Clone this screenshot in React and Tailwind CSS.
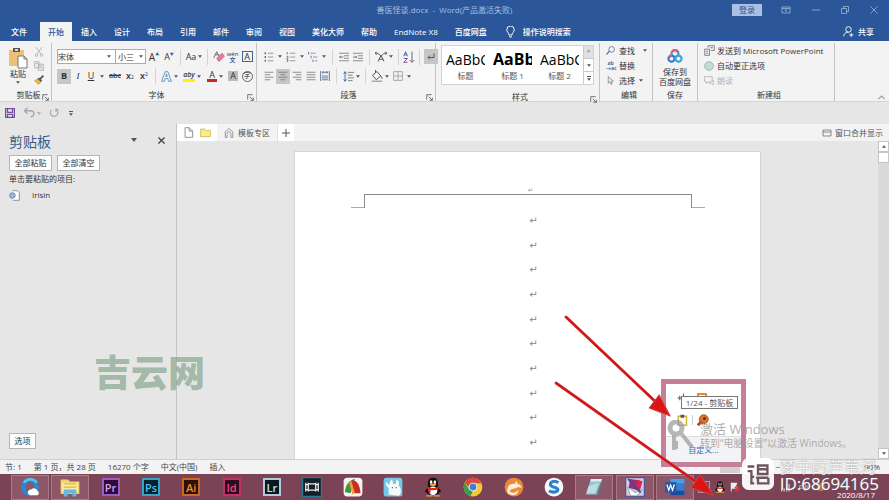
import React from "react";

function Icon({ className = "size-3", box = "0 0 16 16", children }) {
  return (
    <svg viewBox={box} className={"shrink-0 " + className} fill="none" stroke="currentColor" strokeWidth="1.3" aria-hidden="true">
      {children}
    </svg>
  );
}

function Caret() {
  return (
    <svg viewBox="0 0 6 4" className="h-[3px] w-1 shrink-0" fill="#555" aria-hidden="true">
      <path d="M0 0h6L3 4z" />
    </svg>
  );
}

function Tool({ label, on, className = "w-4", children }) {
  return (
    <button aria-label={label} className={"flex h-[15px] shrink-0 items-center justify-center gap-0.5 " + (on ? "bg-[#c6c6c6] " : "") + className}>
      {children}
    </button>
  );
}

function Group({ name, launcher, className, children }) {
  return (
    <section className={"mt-0.5 flex shrink-0 flex-col border-r border-[#c4c4c4] " + className}>
      <div className="h-[46px] shrink-0">{children}</div>
      <div className="relative flex h-3 shrink-0 items-center justify-center whitespace-nowrap text-[#333]">
        {name}
        {launcher && (
          <Icon className="absolute right-0.5 bottom-0 size-[7px] text-[#666]" box="0 0 10 10">
            <path d="M1 8V1h7M4 4l5 5M9 5v4H5" />
          </Icon>
        )}
      </div>
    </section>
  );
}

const lines = {
  left: "M1 2h14M1 6h9M1 10h14M1 14h9",
  center: "M1 2h14M4 6h8M1 10h14M4 14h8",
  right: "M1 2h14M6 6h9M1 10h14M6 14h9",
  full: "M1 2h14M1 6h14M1 10h14M1 14h14",
};

function Separator() {
  return <span className="mx-1 h-4 w-px shrink-0 bg-[#d4d4d4]" />;
}

function TitleBar() {
  return (
    <header className="relative flex h-5 shrink-0 items-center justify-end gap-[19px] pr-[11px] text-[#b9cbe6]">
      <h1 className="absolute inset-x-0 text-center text-[8px] text-[#a9bfdf]">善医怪谈.docx &nbsp;-&nbsp; Word(产品激活失败)</h1>
      <button className="relative flex h-3 w-[30px] items-center justify-center bg-[#a9c0e2] text-[#2b579a]">登录</button>
      <button aria-label="功能区显示选项" className="relative">
        <Icon className="h-2 w-2.5"><path d="M0 2h16v12H0zM0 5h16M8 12V7M6 9l2-2 2 2" /></Icon>
      </button>
      <button aria-label="最小化" className="relative ml-0.5"><Icon className="size-2"><path d="M0 8h16" /></Icon></button>
      <button aria-label="还原" className="relative ml-0.5"><Icon className="size-2"><path d="M1 5h10v10H1zM5 5V1h10v10h-4" /></Icon></button>
      <button aria-label="关闭" className="relative ml-0.5"><Icon className="size-2"><path d="M1 1l14 14M15 1L1 15" /></Icon></button>
    </header>
  );
}

function Tabs() {
  const names = ["插入", "设计", "布局", "引用", "邮件", "审阅", "视图", "美化大师", "帮助", "EndNote X8", "百度网盘"];
  return (
    <nav className="flex h-[21px] shrink-0 items-end gap-px pr-[15px] pl-[3px] font-medium whitespace-nowrap text-white">
      <button className="mr-1 h-[19px] px-2">文件</button>
      <button className="h-[19px] bg-[#f3f3f3] px-2 text-[#2b579a]">开始</button>
      {names.map((n) => <button key={n} className="h-[19px] px-2">{n}</button>)}
      <button className="flex h-[19px] items-center gap-2 pl-2.5">
        <Icon className="h-3 w-[9px]" box="0 0 12 16"><path d="M4 12C4 9 1 8 1 5a5 5 0 0 1 10 0c0 3-3 4-3 7zM4 14.500h4" /></Icon>
        操作说明搜索
      </button>
      <button className="ml-auto flex h-[19px] items-center gap-1">
        <Icon className="size-[11px]"><circle cx="8" cy="5" r="4" /><path d="M1 15c0-4 3-6 7-6M9 13h6M12 10v6" /></Icon>
        共享
      </button>
    </nav>
  );
}

function Clipboard() {
  return (
    <Group name="剪贴板" launcher className="w-[52px] pl-1.5">
      <div className="flex gap-1.5 pt-1 pl-0.5">
        <button className="flex flex-col items-center">
          <svg viewBox="0 0 20 22" className="h-[22px] w-5" aria-hidden="true">
            <path d="M1 3h15v16H1z" fill="#edc077" /><path d="M5 1h7v4H5z" fill="#555" /><path d="M7 2h3v2H7z" fill="#ddd" />
            <path d="M10 9h6l3 3v9h-9z" fill="#fff" stroke="#777" /><path d="M16 9v3h3" fill="none" stroke="#777" />
          </svg>
          <span className="leading-[10px]">粘贴</span>
          <span className="flex pt-0.5"><Caret /></span>
        </button>
        <div className="flex flex-col gap-1 text-[#aaa]">
          <button aria-label="剪切"><Icon className="size-2.5"><path d="M3 0l8 11M13 0L5 11" /><circle cx="4" cy="13" r="2" /><circle cx="12" cy="13" r="2" /></Icon></button>
          <button aria-label="复制"><Icon className="size-2.5"><path d="M1 1h7v10H1zM7 5h8v10H7zM9 8h4M9 11h4M3 4h3" fill="#eee" /></Icon></button>
          <button aria-label="格式刷"><Icon className="size-2.5"><path d="M1 9l5-3 5 5-4 4z" fill="#e8b565" stroke="#c99846" /><path d="M7 5l5 5M9 7l6-6" stroke="#555" strokeWidth="3" /></Icon></button>
        </div>
      </div>
    </Group>
  );
}

function FontGroup() {
  return (
    <Group name="字体" launcher className="w-[205px] pl-[5px]">
      <div className="flex h-[25px] items-center pt-0.5">
        <label className="flex h-[15px] w-[59px] items-center border border-[#ababab] bg-white pr-1">
          <select aria-label="字体" className="min-w-0 flex-1 appearance-none"><option>宋体</option></select><Caret />
        </label>
        <label className="flex h-[15px] w-[30px] items-center border border-l-0 border-[#ababab] bg-white pr-0.5 pl-0.5">
          <select aria-label="字号" className="min-w-0 flex-1 appearance-none"><option>小三</option></select><Caret />
        </label>
        <Tool label="增大字号"><span className="text-[10px]">A</span><span className="-ml-0.5 self-start text-[4px] text-[#35679b]">▲</span></Tool>
        <Tool label="减小字号" className="w-3.5"><span className="text-[9px]">A</span><span className="-ml-0.5 self-start text-[4px] text-[#35679b]">▼</span></Tool>
        <Separator />
        <Tool label="更改大小写" className="w-[18px]"><span className="text-[9px]">Aa</span><Caret /></Tool>
        <Separator />
        <Tool label="清除格式" className="w-3.5">
          <Icon className="size-3"><path d="M1 9l4-8 3 6M3 5h4" stroke="#667" /><path d="M5 10l7-7 3 4-7 7z" fill="#e57e93" stroke="#c96a80" /></Icon>
        </Tool>
        <Tool label="拼音指南" className="w-[13px]"><span className="text-[6px] leading-[6px]">wén<br /><b className="text-[#35679b]">文</b></span></Tool>
        <Tool label="字符边框"><span className="flex size-[11px] items-center justify-center border border-[#40648d] text-[9px] font-medium">A</span></Tool>
      </div>
      <div className="flex h-4 items-center text-[9px]">
        <Tool label="加粗" on className="w-3.5"><b>B</b></Tool>
        <Tool label="倾斜" className="w-3.5"><i className="font-['Liberation_Serif']">I</i></Tool>
        <Tool label="下划线" className="w-[22px]"><u>U</u><span className="ml-1"><Caret /></span></Tool>
        <Tool label="删除线"><s className="text-[7px] font-semibold">abc</s></Tool>
        <Tool label="下标" className="w-3.5"><b className="font-semibold">x</b><sub className="-ml-0.5 text-[5px]">2</sub></Tool>
        <Tool label="上标" className="w-3.5"><b className="font-semibold">x</b><sup className="-ml-0.5 text-[5px]">2</sup></Tool>
        <Separator />
        <Tool label="文本效果" className="w-[18px]">
          <Icon className="size-[11px] text-[#5a90c8]"><path d="M1 15L6 1h4l5 14h-4l-1-4H6l-1 4zM7 8l1-4 1 4z" /></Icon><Caret />
        </Tool>
        <Tool label="突出显示" className="ml-1 w-5"><span className="border-b-[3px] border-[#fff200] text-[7px] leading-2 font-semibold italic">aby</span><Caret /></Tool>
        <Tool label="字体颜色" className="ml-1 w-[18px]"><span className="border-b-[3px] border-[#c62828] px-0.5 leading-[9px] font-medium">A</span><Caret /></Tool>
        <Tool label="字符底纹" className="ml-0.5 w-3.5"><span className="flex size-[10px] items-center justify-center bg-[#bbb]">A</span></Tool>
        <Tool label="带圈字符" className="w-3.5"><span className="flex size-[11px] items-center justify-center rounded-full border border-[#666] text-[7px]">字</span></Tool>
      </div>
    </Group>
  );
}

function ParagraphGroup() {
  const list = <path d="M6 2h9M6 8h9M6 14h9" stroke="#888" />;
  return (
    <Group name="段落" launcher className="w-[179px] pl-[5px]">
      <div className="flex h-[25px] items-center pt-0.5">
        <Tool label="项目符号" className="w-[22px]"><Icon className="size-2.5">{list}<path d="M1 2h2M1 8h2M1 14h2" stroke="#35679b" strokeWidth="3" /></Icon><span className="ml-0.5"><Caret /></span></Tool>
        <Tool label="编号" className="w-[22px]"><Icon className="size-2.5">{list}<path d="M2 0v4M1 7h2v3H1M1 12h2v3H1" stroke="#35679b" /></Icon><span className="ml-0.5"><Caret /></span></Tool>
        <Tool label="多级列表" className="w-[22px]"><Icon className="size-2.5"><path d="M4 2h8M8 8h7M11 14h4" stroke="#888" /><path d="M1 0v4M5 6v4M8 12v4" stroke="#35679b" /></Icon><span className="ml-0.5"><Caret /></span></Tool>
        <Separator />
        <Tool label="减少缩进" className="w-3.5"><Icon className="size-2.5 text-[#777]"><path d="M0 2h16M8 6h8M8 10h8M0 14h16" /><path d="M7 8H1M3 6L1 8l2 2" stroke="#2b6cb0" /></Icon></Tool>
        <Tool label="增加缩进" className="w-3.5"><Icon className="size-2.5 text-[#777]"><path d="M0 2h16M8 6h8M8 10h8M0 14h16" /><path d="M0 8h6M4 6l2 2-2 2" stroke="#2b6cb0" /></Icon></Tool>
        <Separator />
        <Tool label="中文版式" className="w-5"><Icon className="size-3"><path d="M4 14l4-8 4 8M5 11h6M0 3h4l4 4M16 3h-4L8 7M2 1L0 3l2 2M14 1l2 2-2 2" stroke="#555" /></Icon><Caret /></Tool>
        <Separator />
        <Tool label="排序" className="w-3"><Icon className="size-3"><path d="M1 7l2.500-6L6 7M2 5h3" stroke="#2b6cb0" /><path d="M1 10h5l-5 5h5" stroke="#8b4aa0" /><path d="M12 1v14M9 12l3 3 3-3" stroke="#666" /></Icon></Tool>
        <Separator />
        <Tool label="显示编辑标记" on className="w-3.5"><Icon className="size-2 text-[#555]"><path d="M14 1v8H3M6 5L2 9l4 4" strokeWidth="2" /></Icon></Tool>
      </div>
      <div className="flex h-4 items-center text-[#777]">
        <Tool label="左对齐" className="w-3.5"><Icon className="size-2.5"><path d={lines.left} /></Icon></Tool>
        <Tool label="居中" on className="w-3.5"><Icon className="size-2.5"><path d={lines.center} /></Icon></Tool>
        <Tool label="右对齐" className="w-3.5"><Icon className="size-2.5"><path d={lines.right} /></Icon></Tool>
        <Tool label="两端对齐" className="w-3.5"><Icon className="size-2.5"><path d={lines.full} /></Icon></Tool>
        <Tool label="分散对齐" className="w-3.5"><Icon className="size-2.5 text-[#47688c]"><path d="M1 0v16M15 0v16M3 2h10M3 8h10M3 11h10M3 14h10M5 0v4M11 0v4" /></Icon></Tool>
        <Separator />
        <Tool label="行距" className="w-5"><Icon className="size-[11px]"><path d="M7 2h9M7 6h7M7 10h9M7 14h7" /><path d="M3 1v14M1 4l2-3 2 3M1 12l2 3 2-3" stroke="#2b6cb0" /></Icon><Caret /></Tool>
        <Separator />
        <Tool label="底纹" className="w-5"><Icon className="size-3"><path d="M2 7l6-5 5 6-6 5zM6 4V0M13 8c2 2 2 3 1 4" stroke="#555" /><path d="M1 15h14" stroke="#aaa" strokeWidth="2" /></Icon><Caret /></Tool>
        <Tool label="边框" className="ml-0.5 w-5"><Icon className="size-2.5"><path d="M1 1h14v14H1zM8 1v14M1 8h14" stroke="#999" /></Icon><span className="ml-0.5"><Caret /></span></Tool>
      </div>
    </Group>
  );
}

function StylesGroup() {
  const styles = [
    ["标题", "text-[14px]"],
    ["标题 1", "text-[16px] font-bold"],
    ["标题 2", "text-[14px]"],
  ];
  return (
    <Group name="样式" launcher className="w-[164px] pt-0.5 pl-[5px]">
      <div className="-mb-0.5 flex h-10 w-[153px] border border-[#d2d2d2] bg-white">
        {styles.map(([n, c]) => (
          <button key={n} className="flex w-[47px] flex-col items-center px-1">
            <span className={"h-[26px] w-[39px] overflow-hidden text-left leading-[27px] text-black " + c}>AaBbC</span>
            <span className="leading-2 text-[#555]">{n}</span>
          </button>
        ))}
        <div className="ml-auto flex w-2.5 flex-col divide-y divide-[#c8c8c8] border-l border-[#c8c8c8]">
          <button aria-label="上一行" className="flex flex-1 items-center justify-center bg-[#e0e0e0] text-[4px] text-[#aaa]">▲</button>
          <button aria-label="下一行" className="flex flex-1 items-center justify-center"><Caret /></button>
          <button aria-label="其他" className="flex flex-1 flex-col items-center justify-center gap-px"><span className="h-px w-1 bg-[#555]" /><Caret /></button>
        </div>
      </div>
    </Group>
  );
}

function Ribbon() {
  return (
    <div className="flex h-[61px] shrink-0 border-b border-[#d5d5d5] bg-[#f3f3f3] text-[#333]">
      <Clipboard />
      <FontGroup />
      <ParagraphGroup />
      <StylesGroup />
      <Group name="编辑" className="w-[53px] pl-1.5">
        <div className="flex flex-col items-start">
          <button className="flex h-[15px] items-center gap-1"><Icon className="size-[9px] text-[#35679b]"><circle cx="10" cy="6" r="5" /><path d="M6 9l-5 6" strokeWidth="2" /></Icon>查找<span className="ml-1"><Caret /></span></button>
          <button className="flex h-[15px] items-center gap-1"><span className="w-[9px] text-[5px] leading-[5px] font-bold text-[#486c96]">ab<br />→ac</span>替换</button>
          <button className="flex h-[15px] items-center gap-1"><Icon className="size-[9px] text-[#777]"><path d="M4 1v12l3-3 2 5 2-1-2-5h4z" /></Icon>选择<Caret /></button>
        </div>
      </Group>
      <Group name="保存" className="w-[45px]">
        <button className="flex w-full flex-col items-center pt-1.5 leading-[10px]">
          <svg viewBox="0 0 18 16" className="mb-1 h-3.5 w-[18px]" fill="none" strokeWidth="2.500" aria-hidden="true">
            <circle cx="9" cy="5" r="4" stroke="#3e9fe0" /><circle cx="5" cy="11" r="3.500" stroke="#2d7fd0" /><circle cx="13" cy="11" r="3.500" stroke="#38a6d8" /><path d="M5.500 3.500C7 1 11 1 12.500 4M2 10l3-3" stroke="#e9596b" />
          </svg>
          保存到<br />百度网盘
        </button>
      </Group>
      <Group name="新建组" className="w-[137px] pl-1.5">
        <div className="flex flex-col items-start whitespace-nowrap">
          <button className="flex h-[15px] items-center gap-0.5"><Icon className="size-[11px] text-[#777]"><path d="M1 6h7v9H1zM6 4V1h9v7h-5M3 9h3M3 12h3M9 4h4" /></Icon>发送到 Microsoft PowerPoint</button>
          <button className="flex h-[15px] items-center gap-[3px]"><Icon className="size-2.5"><circle cx="8" cy="8" r="7" fill="#c1ddd3" stroke="#8bb8aa" /></Icon>自动更正选项</button>
          <button className="flex h-[15px] items-center gap-[3px] text-[#b0b0b0]"><Icon className="size-2.5"><path d="M1 1h12v7M1 1v8h3v3l4-3M9 9h3l3-2v7l-3-2H9z" /></Icon>朗读</button>
        </div>
      </Group>
      <button aria-label="折叠功能区" className="mt-auto ml-auto p-1 pb-0 text-[#555]"><Icon className="size-[7px]"><path d="M1 11l7-6 7 6" strokeWidth="2" /></Icon></button>
    </div>
  );
}

function QuickAccess() {
  return (
    <div className="flex h-[22px] shrink-0 items-center gap-2 pl-[5px] text-[#aaa]">
      <button aria-label="保存"><Icon className="size-2.5 text-[#75519c]"><path d="M1 1h14v14H1zM4 1v6h8V1M4 15v-5h8v5" strokeWidth="2" /></Icon></button>
      <button aria-label="撤消" className="flex items-center gap-0.5"><Icon className="size-3"><path d="M2 5h8c6 0 6 8 0 8M6 1L2 5l4 4" strokeWidth="2" /></Icon><span className="opacity-40"><Caret /></span></button>
      <button aria-label="重复"><Icon className="size-2.5"><path d="M4 3a6 6 0 1 0 7-1M11 6V2h4" strokeWidth="2" /></Icon></button>
      <button aria-label="自定义快速访问工具栏" className="ml-0.5 flex flex-col items-center gap-px"><span className="h-px w-1 bg-[#555]" /><Caret /></button>
    </div>
  );
}

function ClipboardPane() {
  return (
    <aside className="flex w-[177px] shrink-0 flex-col border-r border-[#c4c4c4] px-[9px] text-[#333]">
      <div className="flex items-center pt-2">
        <h2 className="text-[14px] leading-5 text-[#3a5a84]">剪贴板</h2>
        <button aria-label="任务窗格选项" className="-mt-1 ml-auto"><Icon className="size-1.5" box="0 0 6 6"><path d="M0 1h6L3 5z" fill="#555" stroke="none" /></Icon></button>
        <button aria-label="关闭窗格" className="-mt-1 ml-[21px] pr-0.5"><Icon className="size-[7px] text-[#444]"><path d="M1 1l14 14M15 1L1 15" strokeWidth="3" /></Icon></button>
      </div>
      <div className="flex gap-[5px] pt-[3px]">
        <button className="h-4 w-[43px] border border-[#b5b5b5] bg-[#fdfdfd] leading-3">全部粘贴</button>
        <button className="h-4 w-[43px] border border-[#b5b5b5] bg-[#fdfdfd] leading-3">全部清空</button>
      </div>
      <p className="pt-0.5 leading-3">单击要粘贴的项目:</p>
      <button className="flex h-5 items-center gap-3">
        <Icon className="size-[11px]"><path d="M5 1h7l3 3v11H6" stroke="#888" fill="#fff" /><circle cx="5" cy="8" r="4" fill="#9cbad9" stroke="#567fae" /></Icon>
        Irisin
      </button>
      <button className="mt-auto mb-2.5 h-4 w-[27px] border border-[#b5b5b5] bg-[#fdfdfd] leading-3">选项</button>
    </aside>
  );
}

function DocumentTabs() {
  return (
    <div className="flex h-[17px] shrink-0 items-stretch bg-[#f3f3f3] text-[#555]">
      <div className="flex w-10 items-center justify-center gap-1.5 bg-white">
        <button aria-label="新建文档"><Icon className="size-[11px] text-[#888]"><path d="M3 1h6l5 5v9H3zM9 1v5h5" /></Icon></button>
        <button aria-label="打开文件夹"><Icon className="size-[11px]"><path d="M1 3h6l2 2h6v9H1z" fill="#f9eb91" stroke="#d0ba52" /></Icon></button>
      </div>
      <button className="flex w-[61px] items-center justify-center gap-1 border-r border-[#e0e0e0]">
        <Icon className="size-2.5 text-[#888]"><path d="M2 15V6l6-5 6 5v9h-3V9a3 3 0 0 0-6 0v6z" /></Icon>模板专区
      </button>
      <button aria-label="新建标签" className="flex w-4 items-center justify-center bg-white"><Icon className="size-2"><path d="M8 0v16M0 8h16" strokeWidth="2" /></Icon></button>
      <button className="ml-auto flex items-center gap-[3px] pr-1.5">
        <Icon className="h-2 w-2.5"><path d="M0 2h16v12H0zM0 6h16" /></Icon>窗口合并显示
      </button>
    </div>
  );
}

function Page() {
  return (
    <div className="flex min-h-0 flex-1 flex-col">
      <DocumentTabs />
      <div className="flex min-h-0 flex-1">
        <div className="flex min-w-0 flex-1 justify-center pt-2.5">
          <article className="flex w-[467px] flex-col items-center overflow-hidden border border-b-0 border-[#d5d5d5] bg-white text-[#888]">
            <p className="mt-[34px] h-2 pl-1.5 text-[6px] leading-2">↵</p>
            <div className="flex w-[354px] items-end">
              <span className="h-px flex-1 bg-[#aaa]" />
              <span className="h-3.5 w-[328px] border-x border-t border-[#888]" />
              <span className="h-px flex-1 bg-[#aaa]" />
            </div>
            <div className="mt-[5px] flex h-[238px] shrink-0 flex-col justify-between pl-3 font-['DejaVu_Sans'] text-[10px] leading-4">
              {Array.from({ length: 10 }, (_, i) => <p key={i}>↵</p>)}
            </div>
          </article>
        </div>
        <div className="flex w-[11px] shrink-0 flex-col bg-[#dadada]">
          <button aria-label="向上滚动" className="flex h-[11px] items-center justify-center border border-[#c5c5c5] bg-white"><span className="rotate-180"><Caret /></span></button>
          <span className="h-[11px] border border-[#c5c5c5] bg-white" />
          <button aria-label="向下滚动" className="mt-auto flex h-[11px] items-center justify-center border border-[#c5c5c5] bg-white"><Caret /></button>
        </div>
      </div>
    </div>
  );
}

function StatusBar() {
  return (
    <footer className="flex h-[15px] shrink-0 items-center gap-3 border-t border-[#d0d0d0] bg-[#f3f3f3] px-[5px] whitespace-nowrap text-[#444]">
      <span>节: 1</span><span>第 1 页，共 28 页</span><span>16270 个字</span><span>中文(中国)</span><span>插入</span>
      <span className="ml-auto h-3 w-5 bg-[#d0d0d0]" />
      <span className="pr-[72px] pl-6">−</span>
      <span className="pr-1">90%</span>
    </footer>
  );
}

function Adobe({ name, className }) {
  return <span className={"flex size-[18px] items-center justify-center border-2 text-[11px] leading-none font-semibold " + className}>{name}</span>;
}

function App32({ children }) {
  return <svg viewBox="0 0 32 32" className="size-5" aria-hidden="true">{children}</svg>;
}

const apps = [
  ["QQ浏览器", true, <App32><circle cx="16" cy="16" r="11" fill="none" stroke="#2b87d6" strokeWidth="7" /><path d="M6 9A13 13 0 0 1 27 9" fill="none" stroke="#59c3ee" strokeWidth="4" /><path d="M13 27a5 5 0 0 1 5-7 6 6 0 0 1 10 2 4 4 0 0 1 0 7H16z" fill="#fff" /></App32>],
  ["文件资源管理器", true, <App32><path d="M1 4h12l3 3h15v20H1z" fill="#efd26e" /><path d="M3 9h26v15H3z" fill="#fbea9d" /><path d="M6 11h20M6 16h20" stroke="#d8b656" strokeWidth="2" /><path d="M6 31V20h20v11h-6v-5h-8v5z" fill="#61b9df" /></App32>],
  ["Premiere", false, <Adobe name="Pr" className="border-[#9a5fc0] bg-[#2b0a3c] text-[#d9a0f2]" />],
  ["Photoshop", false, <Adobe name="Ps" className="border-[#31a5c8] bg-[#07202e] text-[#45c3e8]" />],
  ["Illustrator", false, <Adobe name="Ai" className="border-[#c86a25] bg-[#2c1002] text-[#f08a32]" />],
  ["InDesign", false, <Adobe name="Id" className="border-[#c03268] bg-[#310a1c] text-[#e94b86]" />],
  ["Lightroom", false, <Adobe name="Lr" className="border-[#b0cbd7] bg-[#071a24] text-[#cbe3ee]" />],
  ["视频编辑", false, <App32><path d="M1 1h30v30H1z" fill="#142029" stroke="#28799d" strokeWidth="2" /><path d="M6 9v14M10 9v14M22 9v14M26 9v14M10 11h12M10 21h12M6 12h4M6 20h4M22 12h4M22 20h4" stroke="#eee" strokeWidth="2" /></App32>],
  ["福昕", false, <App32><rect x="1" y="1" width="30" height="30" rx="6" fill="#f7f4ee" /><path d="M3 24C4 12 10 5 19 3l-7 23z" fill="#3d9442" /><path d="M11 8c8-7 16 2 17 18H18z" fill="#c92d25" /><path d="M10 10l3-5 6 20-4 3z" fill="#ed9b3c" /></App32>],
  ["助手", false, <App32><rect x="1" y="1" width="30" height="30" rx="4" fill="#74c7e5" /><path d="M9 28V17C5 15 4 11 5 8l5 5c0-6 3-9 5-9l1 7h4l2-7c4 2 4 7 3 10 5 4 5 13 0 16z" fill="#f4fbfd" /><circle cx="15" cy="17" r="1" fill="#357" /><circle cx="21" cy="17" r="1" fill="#357" /></App32>],
  ["QQ", false, <App32><path d="M8 15C7 5 10 1 16 1s9 4 8 14l5 8-3 2c-2 5-18 5-20 0l-3-2z" fill="#111" /><ellipse cx="16" cy="22" rx="7" ry="7" fill="#fff" /><ellipse cx="13" cy="8" rx="2" ry="3" fill="#fff" /><ellipse cx="19" cy="8" rx="2" ry="3" fill="#fff" /><ellipse cx="16" cy="12.500" rx="5" ry="2" fill="#f4a622" /><path d="M7 15q9 5 18 0v4q-6 3-13 2v5H9v-6l-2-1z" fill="#dc2525" /><path d="M5 29h10v2H5zM17 29h10v2H17z" fill="#f4a622" /></App32>],
  ["Chrome", false, <App32><circle cx="16" cy="16" r="15" fill="#f5c932" /><path d="M3 9A15 15 0 0 1 30 10H16l-5 8z" fill="#dd4a3d" /><path d="M3 9l7 11 6 2-4 9A15 15 0 0 1 3 9z" fill="#3a9e52" /><circle cx="16" cy="16" r="7" fill="#fff" /><circle cx="16" cy="16" r="5.500" fill="#3b7edb" /></App32>],
  ["UC", false, <App32><circle cx="16" cy="16" r="15" fill="#e98b35" /><path d="M5 22c0-7 4-12 12-11l3-5 2 5c4 1 6 3 6 6l-6-1c-5 5-9 0-13 7 5 4 11 2 14-3 0 7-4 9-9 9-6 0-9-3-9-7z" fill="#fcebdb" /></App32>],
  ["搜狗浏览器", false, <App32><circle cx="16" cy="16" r="15" fill="#f4f8fc" /><path d="M23 9C15 4 8 9 11 14c3 3 10 2 11 6 0 4-8 6-14 2" fill="none" stroke="#2e80cb" strokeWidth="5" /></App32>],
  ["记事本", true, <App32><path d="M11 3h18l-7 25H3z" fill="#93c7d0" /><path d="M11 3h18l-1 4H10z" fill="#d9eef0" /><path d="M7 15l16-6-5 17H4z" fill="#bcdee3" /><path d="M29 3l-6 25-3-2z" fill="#567f87" /></App32>],
  ["EndNote", true, <App32><path d="M1 1h30v30H1z" fill="#d7c8e8" stroke="#4b569c" strokeWidth="2" /><path d="M8 3l14 2-2 16-14-4z" fill="#a22a68" /><path d="M20 4l8 3-4 14-7-3z" fill="#d3284e" /><path d="M4 16l12 9 12-5-9 10H9z" fill="#fff" stroke="#4d9f68" /><path d="M5 3l20 22" stroke="#4048a0" strokeWidth="3" /></App32>],
  ["Word", true, <App32><path d="M9 3h22v26H9z" fill="#387cd0" /><path d="M9 3h22v7H9z" fill="#4c9de7" /><path d="M9 22h22v7H9z" fill="#194c9c" /><path d="M0 8h18v17H0z" fill="#2459aa" /><path d="M3 12l3 9 3-8 3 8 3-9" fill="none" stroke="#fff" strokeWidth="2" /></App32>],
];

function Taskbar() {
  return (
    <div className="flex h-[26px] shrink-0 items-center bg-[#7c4357] pl-[11px]">
      <div className="flex w-[683px] shrink-0 justify-between">
        {apps.map(([name, open, art]) => (
          <button key={name} aria-label={name} className={"flex h-[25px] w-[38px] items-center justify-center border " + (open ? "border-[#a77c8a] bg-[#8c5767]" : "border-transparent")}>{art}</button>
        ))}
      </div>
      <div className="flex items-center gap-1 pl-1 text-white">
        <button aria-label="显示隐藏的图标" className="size-3 border border-[#b7929d]" />
        <button aria-label="QQ" className="flex">
          <svg viewBox="0 0 32 32" className="size-3" aria-hidden="true">
            <path d="M8 15C7 5 10 1 16 1s9 4 8 14l5 8-3 2c-2 5-18 5-20 0l-3-2z" fill="#111" /><ellipse cx="16" cy="22" rx="7" ry="7" fill="#fff" /><circle cx="13" cy="8" r="2" fill="#fff" /><circle cx="19" cy="8" r="2" fill="#fff" /><path d="M7 15q9 5 18 0v4q-9 4-18 0z" fill="#dc2525" /><path d="M5 29h22v2H5zM12 12h8v2h-8z" fill="#f4a622" />
          </svg>
        </button>
        <button aria-label="网络"><Icon className="size-2.5"><path d="M2 1v14M2 2h9l-2 4 2 4H2" fill="#eee" /><path d="M8 8l6 6M14 8l-6 6" stroke="#e33" strokeWidth="3" /></Icon></button>
      </div>
      <div className="ml-auto flex items-center gap-2 self-start pt-2 pr-16 text-white opacity-70">
        <Icon className="size-2.5"><path d="M1 15v-3M5 15v-5M9 15V7M13 15V3" strokeWidth="2" /></Icon>
        <Icon className="size-2.5"><path d="M1 6h4l5-4v12l-5-4H1zM12 5q3 3 0 6" /></Icon>
        <span className="size-2 rounded-full bg-[#f3893d]" />
      </div>
    </div>
  );
}

function TrayPopup() {
  return (
    <div className="absolute right-[143px] bottom-[33px] flex h-[88px] w-[85px] flex-col border-[5px] border-[#c77f99] bg-white">
      <div className="relative flex-1">
        <Icon className="absolute top-2 left-2.5 size-3 text-[#555]"><path d="M5 5v6M2 8h6M10 2v4" /></Icon>
        <span className="absolute top-[9px] left-[31px] h-2 w-2.5 border-2 border-[#e58a35]" />
        <Icon className="absolute top-[30px] left-2.5 size-3"><path d="M3 3h11v12H3z" stroke="#d1b63f" strokeWidth="2" fill="#fffdf0" /><path d="M6 1h5v4H6z" fill="#555" stroke="none" /></Icon>
        <span className="absolute top-[31px] left-[26px] h-2.5 w-px bg-[#ccc]" />
        <Icon className="absolute top-[30px] left-[31px] size-3"><circle cx="9" cy="7" r="6" fill="#d9742b" stroke="#b35b22" /><path d="M1 15l5-5" stroke="#ad511c" strokeWidth="4" /><circle cx="10" cy="6" r="2" fill="#623016" stroke="none" /></Icon>
        <div role="tooltip" className="absolute top-3 left-[15px] flex h-[13px] w-[57px] items-center justify-center border border-[#777] bg-white whitespace-nowrap text-[#555]">1/24 - 剪贴板</div>
      </div>
      <div className="flex h-[26px] items-center justify-center border-t border-[#ddd] bg-[#f3f3f5]"><a href="#customize" className="text-[#286aa6]">自定义...</a></div>
    </div>
  );
}

function Overlays() {
  return (
    <>
      <div className="pointer-events-none absolute bottom-[110px] left-[94px] text-[37px] leading-[34px] font-black text-[#7da083]/65">吉云网</div>
      <TrayPopup />
      <svg viewBox="0 0 30 32" className="pointer-events-none absolute right-[194px] bottom-[48px] h-8 w-[30px]" fill="none" stroke="#999" opacity=".7" aria-hidden="true">
        <circle cx="11" cy="8" r="6" strokeWidth="5" /><path d="M9 14v16M9 23h4M9 27h4M15 12l12 15" strokeWidth="4" />
      </svg>
      <div className="pointer-events-none absolute bottom-[51px] right-[38px] w-[151px] whitespace-nowrap text-[#999]/80">
        <p className="text-[13px] leading-4">激活 Windows</p>
        <p className="text-[10px] leading-3">转到“电脑设置”以激活 Windows。</p>
      </div>
      <svg viewBox="0 0 170 190" className="pointer-events-none absolute right-[169px] bottom-0 h-[190px] w-[170px]" aria-hidden="true">
        <g stroke="#c94a4a" strokeWidth="3" fill="#dc1414" strokeLinecap="round">
          <path d="M16 7L110 96M6 73L152 176" /><path d="M16 7L110 96M6 73L152 176" stroke="#d81111" strokeWidth="2" />
          <path d="M120 106l-21-8 10-13zM163 185l-22-7 9-13z" strokeWidth="1" />
        </g>
      </svg>
      <div className="pointer-events-none absolute right-0 bottom-0 flex items-start gap-1.5 pr-2.5">
        <svg viewBox="0 0 34 34" className="size-8 shrink-0" fill="none" aria-hidden="true">
          <rect width="34" height="34" rx="7" fill="#fff" opacity=".95" />
          <path d="M6 9h7M6 14h4v13h3M9 20h4M17 8h10v9H17zM17 12h10M15 21h13M17 21v6h11v-6" stroke="#6f5560" strokeWidth="2.500" />
        </svg>
        <div className="text-white">
          <p className="text-[16px] leading-[18px] font-light text-shadow-[0_0_2px_#666]">梦中的芦苇河</p>
          <p className="text-[17px] leading-4 text-shadow-[0_0_2px_#666]">ID:68694165</p>
          <p className="-mt-0.5 pr-1 text-right text-[8px] leading-[10px]">2020/8/17</p>
        </div>
      </div>
    </>
  );
}

export default function App() {
  return (
    <main lang="zh-CN" className="relative flex h-screen flex-col overflow-hidden bg-[#e6e6e6] font-['Open_Sans','Noto_Sans_CJK_SC',sans-serif] text-[8px] leading-3">
      <div className="shrink-0 bg-[#2b579a]">
        <TitleBar />
        <Tabs />
      </div>
      <Ribbon />
      <QuickAccess />
      <div className="flex min-h-0 flex-1">
        <ClipboardPane />
        <Page />
      </div>
      <StatusBar />
      <Taskbar />
      <Overlays />
    </main>
  );
}
